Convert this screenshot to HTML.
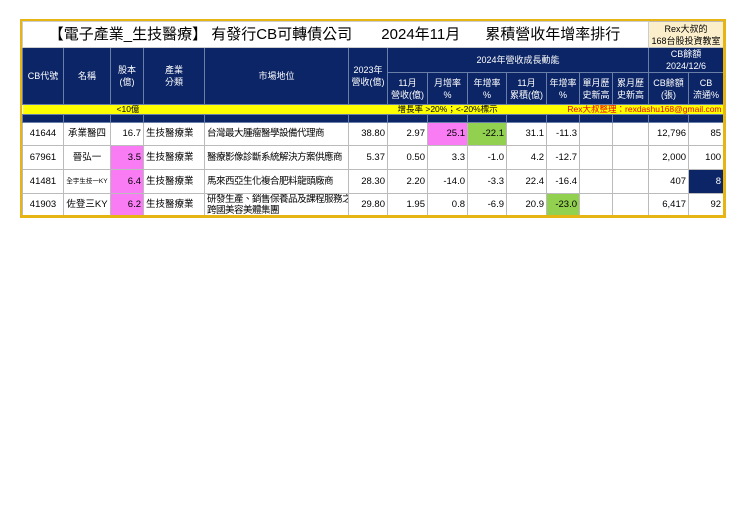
<!DOCTYPE html><html><head><meta charset="utf-8"><style>
body{margin:0;background:#fff;width:740px;height:523px;position:relative;font-family:"Liberation Sans","Noto Sans CJK TC",sans-serif;overflow:hidden;}
.wrap{position:absolute;left:20px;top:19px;width:706px;height:199px;border:2px solid #e6b413;border-right-width:3px;border-bottom-width:3px;box-sizing:border-box;z-index:2;pointer-events:none;}
table{position:absolute;left:22px;top:21px;width:701px;border-collapse:collapse;table-layout:fixed;}
td{border:1px solid #bbb;padding:0 2px;font-size:9.5px;line-height:12px;white-space:nowrap;overflow:hidden;vertical-align:middle;}
td.m{letter-spacing:-0.5px;}
.h td{background:#0c2566;color:#fff;text-align:center;border-color:#6a7fa8;line-height:12px;font-size:9px;}
.r{text-align:right;}.c{text-align:center;}
.pk{background:#f97cf5;}.gr{background:#92d050;}.nv{background:#0c2566;color:#fff;}
</style></head><body>
<div class="wrap"></div>
<table>
<colgroup><col style="width:41px"><col style="width:47px"><col style="width:33px"><col style="width:61px"><col style="width:144px"><col style="width:39px"><col style="width:40px"><col style="width:40px"><col style="width:39px"><col style="width:40px"><col style="width:33px"><col style="width:33px"><col style="width:36px"><col style="width:40px"><col style="width:35px"></colgroup>
<tr style="height:26px"><td colspan="13" style="font-size:15px;line-height:20px;text-align:center;border-color:#ccc;padding-left:0">【電子產業_生技醫療】 有發行CB可轉債公司&nbsp;&nbsp;&nbsp;&nbsp;&nbsp;&nbsp;&nbsp;2024年11月&nbsp;&nbsp;&nbsp;&nbsp;&nbsp;&nbsp;累積營收年增率排行</td><td colspan="2" style="background:#fbeecb;text-align:center;font-size:9px;line-height:12px;">Rex大叔的<br>168台股投資教室</td></tr>
<tr class="h" style="height:22px"><td rowspan="2">CB代號</td><td rowspan="2">名稱</td><td rowspan="2">股本<br>(億)</td><td rowspan="2">產業<br>分類</td><td rowspan="2">市場地位</td><td rowspan="2">2023年<br>營收(億)</td><td colspan="7">2024年營收成長動能</td><td colspan="2">CB餘額<br>2024/12/6</td></tr>
<tr class="h" style="height:32px"><td>11月<br>營收(億)</td><td>月增率<br>%</td><td>年增率<br>%</td><td>11月<br>累積(億)</td><td>年增率<br>%</td><td>單月歷<br>史新高</td><td>累月歷<br>史新高</td><td>CB餘額<br>(張)</td><td>CB<br>流通%</td></tr>
<tr style="height:10px;background:#ffff00"><td colspan="2" style="border:none"></td><td colspan="3" style="border:none;font-size:8.5px;line-height:9px;padding-left:6px">&lt;10億</td><td style="border:none"></td><td colspan="4" style="border:none;font-size:8.5px;line-height:9px;padding-left:10px">增長率 &gt;20%；&lt;-20%標示</td><td colspan="5" style="border:none;font-size:8.5px;line-height:9px;color:#e60000;text-align:right">Rex大叔整理：rexdashu168@gmail.com</td></tr>
<tr class="h" style="height:8px"><td></td><td></td><td></td><td></td><td></td><td></td><td></td><td></td><td></td><td></td><td></td><td></td><td></td><td></td><td></td></tr>
<tr style="height:23px"><td class="c">41644</td><td class="c">承業醫四</td><td class="r">16.7</td><td>生技醫療業</td><td class="m">台灣最大腫瘤醫學設備代理商</td><td class="r">38.80</td><td class="r">2.97</td><td class="r pk">25.1</td><td class="r gr">-22.1</td><td class="r">31.1</td><td class="r">-11.3</td><td></td><td></td><td class="r">12,796</td><td class="r">85</td></tr>
<tr style="height:24px"><td class="c">67961</td><td class="c">晉弘一</td><td class="r pk">3.5</td><td>生技醫療業</td><td class="m">醫療影像診斷系統解決方案供應商</td><td class="r">5.37</td><td class="r">0.50</td><td class="r">3.3</td><td class="r">-1.0</td><td class="r">4.2</td><td class="r">-12.7</td><td></td><td></td><td class="r">2,000</td><td class="r">100</td></tr>
<tr style="height:24px"><td class="c">41481</td><td class="c" style="font-size:6.5px">全宇生技一KY</td><td class="r pk">6.4</td><td>生技醫療業</td><td class="m">馬來西亞生化複合肥料龍頭廠商</td><td class="r">28.30</td><td class="r">2.20</td><td class="r">-14.0</td><td class="r">-3.3</td><td class="r">22.4</td><td class="r">-16.4</td><td></td><td></td><td class="r">407</td><td class="r nv">8</td></tr>
<tr style="height:23px"><td class="c">41903</td><td class="c">佐登三KY</td><td class="r pk">6.2</td><td>生技醫療業</td><td class="m" style="line-height:11px">研發生產、銷售保養品及課程服務之<br>跨國美容美體集團</td><td class="r">29.80</td><td class="r">1.95</td><td class="r">0.8</td><td class="r">-6.9</td><td class="r">20.9</td><td class="r gr">-23.0</td><td></td><td></td><td class="r">6,417</td><td class="r">92</td></tr>
</table>
</body></html>
